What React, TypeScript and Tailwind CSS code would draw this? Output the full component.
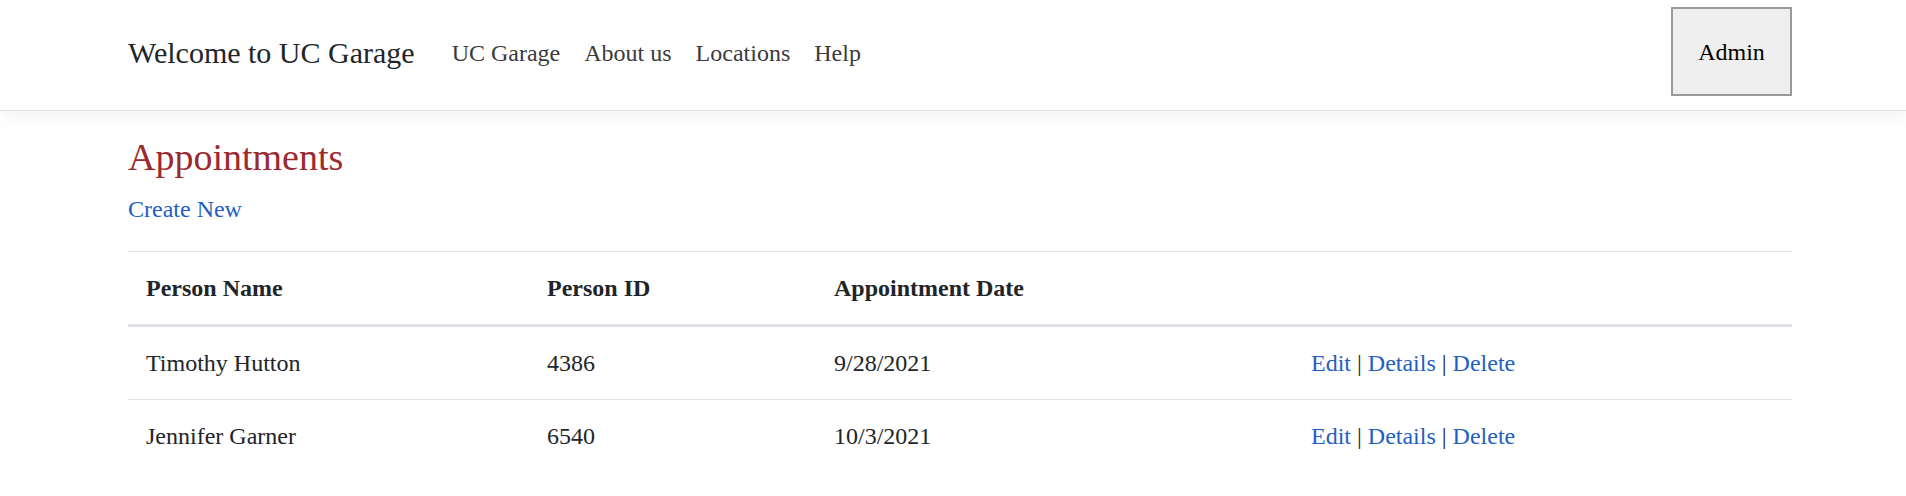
import React from "react";

const rows = [
  { name: "Timothy Hutton", id: "4386", date: "9/28/2021" },
  { name: "Jennifer Garner", id: "6540", date: "10/3/2021" },
];

export default function App() {
  return (
    <div className="min-h-[496px] bg-white text-[#212529] font-['Liberation_Serif',serif] text-[24px] leading-[36px]">
      <nav className="h-[111px] border-b border-[#dedede] shadow-[0_6px_18px_rgba(0,0,0,0.05)] bg-white flex items-center pl-[128px] pr-[114px]">
        <div className="text-[30px] leading-[45px] text-[#212529] mr-[25px] mb-[5px]">Welcome to UC Garage</div>
        <ul className="flex items-center mb-[5px]">
          {["UC Garage", "About us", "Locations", "Help"].map((t) => (
            <li key={t}>
              <a className="block px-[12px] text-[#3b3b3b]">{t}</a>
            </li>
          ))}
        </ul>
        <div className="ml-auto self-start pt-[7px]">
          <button className="w-[121px] h-[89px] bg-[#efefef] border-2 border-[#9a9a9a] text-[24px] text-black font-['Liberation_Serif',serif]">
            Admin
          </button>
        </div>
      </nav>
      <main className="pl-[128px] pr-[114px]">
        <h1 className="text-[38px] leading-[46px] text-[#9b2a2f] mt-[23px]">Appointments</h1>
        <p className="mt-[11px]">
          <a className="text-[#1f5fc4]">Create New</a>
        </p>
        <div className="mt-[24px] border-t border-[#dee2e6]">
          <div className="grid grid-cols-[401px_287px_477px_1fr] border-b-[3px] border-[#dee2e6] font-bold">
            <div className="px-[18px] py-[18px]">Person Name</div>
            <div className="px-[18px] py-[18px]">Person ID</div>
            <div className="px-[18px] py-[18px]">Appointment Date</div>
            <div className="px-[18px] py-[18px]"></div>
          </div>
          {rows.map((r, i) => (
            <div
              key={r.id}
              className={
                i === 0
                  ? "grid grid-cols-[401px_287px_477px_1fr] border-b border-[#dee2e6]"
                  : "grid grid-cols-[401px_287px_477px_1fr]"
              }
            >
              <div className="px-[18px] py-[18px]">{r.name}</div>
              <div className="px-[18px] py-[18px]">{r.id}</div>
              <div className="px-[18px] py-[18px]">{r.date}</div>
              <div className="px-[18px] py-[18px]">
                <a className="text-[#1f5fc4]">Edit</a> | <a className="text-[#1f5fc4]">Details</a> |{" "}
                <a className="text-[#1f5fc4]">Delete</a>
              </div>
            </div>
          ))}
        </div>
      </main>
    </div>
  );
}
